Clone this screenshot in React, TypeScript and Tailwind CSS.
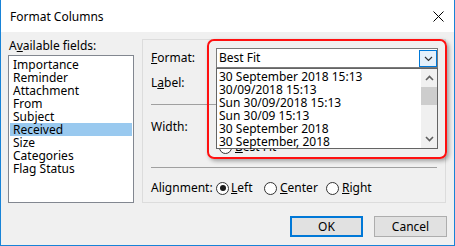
import React from "react";

const F = { fontFamily: '"Noto Sans", "Open Sans", sans-serif' };

function Radio({ checked }: { checked?: boolean }) {
  return (
    <span className="relative inline-flex w-[13px] h-[13px] shrink-0 rounded-full border border-[#333333] bg-white items-center justify-center">
      {checked && <span className="w-[6px] h-[6px] rounded-full bg-[#1a1a1a]" />}
    </span>
  );
}

function Chevron({ up }: { up?: boolean }) {
  return (
    <svg width="9" height="6" viewBox="0 0 9 6">
      <path
        d={up ? "M1 5 L4.5 1.5 L8 5" : "M1 1 L4.5 4.5 L8 1"}
        fill="none"
        stroke="#606060"
        strokeWidth="1.6"
      />
    </svg>
  );
}

export default function App() {
  const fields = [
    "Importance",
    "Reminder",
    "Attachment",
    "From",
    "Subject",
    "Received",
    "Size",
    "Categories",
    "Flag Status",
  ];
  const formats = [
    "30 September 2018 15:13",
    "30/09/2018 15:13",
    "Sun 30/09/2018 15:13",
    "Sun 30/09 15:13",
    "30 September 2018",
    "30 September, 2018",
  ];
  return (
    <div
      style={F}
      className="w-[455px] h-[246px] bg-[#f0f0f0] border-l border-r border-b border-[#1883d7] flex flex-col text-[12px] text-black overflow-hidden"
    >
      {/* title bar */}
      <div className="h-[32px] bg-white flex items-center justify-between pl-[9px] pr-[10px] shrink-0">
        <span className="text-[12px] leading-[16px] mt-[1px]">Format Columns</span>
        <svg width="11" height="11" viewBox="0 0 11 11" className="mt-[1px]">
          <path d="M0.5 0.5 L10.5 10.5 M10.5 0.5 L0.5 10.5" stroke="#000" strokeWidth="1" />
        </svg>
      </div>

      {/* body */}
      <div className="flex pl-[7px] pt-[6px]">
        {/* left column */}
        <div className="w-[126px] flex flex-col shrink-0">
          <div className="h-[16px] leading-[16px] pl-[1px]">
            A<span className="underline">v</span>ailable fields:
          </div>
          <div className="mt-[1px] h-[148px] border border-[#828790] bg-white pt-[2px] px-[1px]">
            {fields.map((f) => (
              <div
                key={f}
                className={`h-[13px] leading-[13px] pl-[3px] ${f === "Received" ? "bg-[#99c9ef]" : ""}`}
              >
                {f}
              </div>
            ))}
          </div>
        </div>

        {/* group box */}
        <div className="relative ml-[8px] mt-[1px] w-[304px] h-[164px] border border-[#dcdcdc] pl-[8px] pt-[8px] flex flex-col">
          {/* Format row */}
          <div className="flex h-[20px] items-center">
            <div className="w-[65px] leading-[16px]">
              <span className="underline">F</span>ormat:
            </div>
            <div className="relative w-[222px] h-[20px] border border-[#7a7a7a] bg-white flex items-center pl-[2px]">
              <span className="leading-[16px]">Best Fit</span>
              <div className="absolute right-0 top-[1px] w-[18px] h-[17px] border border-[#0078d7] bg-[#e5f1fb] flex items-center justify-center">
                <svg width="9" height="6" viewBox="0 0 9 6">
                  <path d="M1 1 L4.5 4.5 L8 1" fill="none" stroke="#333" strokeWidth="1.2" />
                </svg>
              </div>
              {/* dropdown list */}
              <div className="absolute left-[-1px] top-[19px] w-[222px] h-[81px] border border-[#646464] bg-white z-10 flex">
                <div className="flex-1 pt-[1px] pl-[2px]">
                  {formats.map((f) => (
                    <div key={f} className="h-[13px] leading-[13px] whitespace-nowrap">
                      {f}
                    </div>
                  ))}
                </div>
                <div className="w-[16px] bg-[#f0f0f0] flex flex-col items-center">
                  <div className="h-[18px] flex items-center justify-center">
                    <Chevron up />
                  </div>
                  <div className="w-[16px] h-[18px] bg-[#cdcdcd]" />
                  <div className="flex-1" />
                  <div className="h-[18px] flex items-center justify-center">
                    <Chevron />
                  </div>
                </div>
              </div>
            </div>
          </div>

          {/* Label row */}
          <div className="flex h-[20px] items-center mt-[5px]">
            <div className="w-[65px] leading-[16px]">
              L<span className="underline">a</span>bel:
            </div>
          </div>

          <div className="mt-[11px] mr-[8px] h-[1px] bg-[#a0a0a0]" />

          {/* Width row */}
          <div className="flex h-[20px] items-center mt-[12px]">
            <div className="w-[65px] leading-[16px]">Width:</div>
          </div>

          {/* Best fit */}
          <div className="flex h-[16px] items-center mt-[2px] pl-[68px]">
            <Radio />
            <span className="ml-[3px] leading-[16px]">
              <span className="underline">B</span>est Fit
            </span>
          </div>

          <div className="mt-[12px] mr-[8px] h-[1px] bg-[#a0a0a0]" />

          {/* Alignment */}
          <div className="flex h-[16px] items-center mt-[12px]">
            <div className="w-[65px] leading-[16px]">Alignment:</div>
            <div className="w-[48px] flex items-center">
              <Radio checked />
              <span className="ml-[2px] leading-[16px]">
                <span className="underline">L</span>eft
              </span>
            </div>
            <div className="w-[62px] flex items-center">
              <Radio />
              <span className="ml-[3px] leading-[16px]">
                <span className="underline">C</span>enter
              </span>
            </div>
            <div className="flex items-center">
              <Radio />
              <span className="ml-[3px] leading-[16px]">
                <span className="underline">R</span>ight
              </span>
            </div>
          </div>

          {/* red highlight */}
          <div className="absolute left-[64px] top-[-1px] w-[240px] h-[120px] border-2 border-[#ff1010] rounded-[7px] z-20 shadow-[2px_2px_4px_rgba(0,0,0,0.35)] pointer-events-none" />
        </div>
      </div>

      {/* buttons */}
      <div className="flex justify-end gap-[11px] mt-[13px] pr-[7px]">
        <div className="w-[73px] h-[21px] border-2 border-[#0078d7] bg-[#e1e1e1] flex items-center justify-center leading-[16px]">
          OK
        </div>
        <div className="w-[73px] h-[21px] border border-[#adadad] bg-[#e1e1e1] flex items-center justify-center leading-[16px]">
          Cancel
        </div>
      </div>
    </div>
  );
}
